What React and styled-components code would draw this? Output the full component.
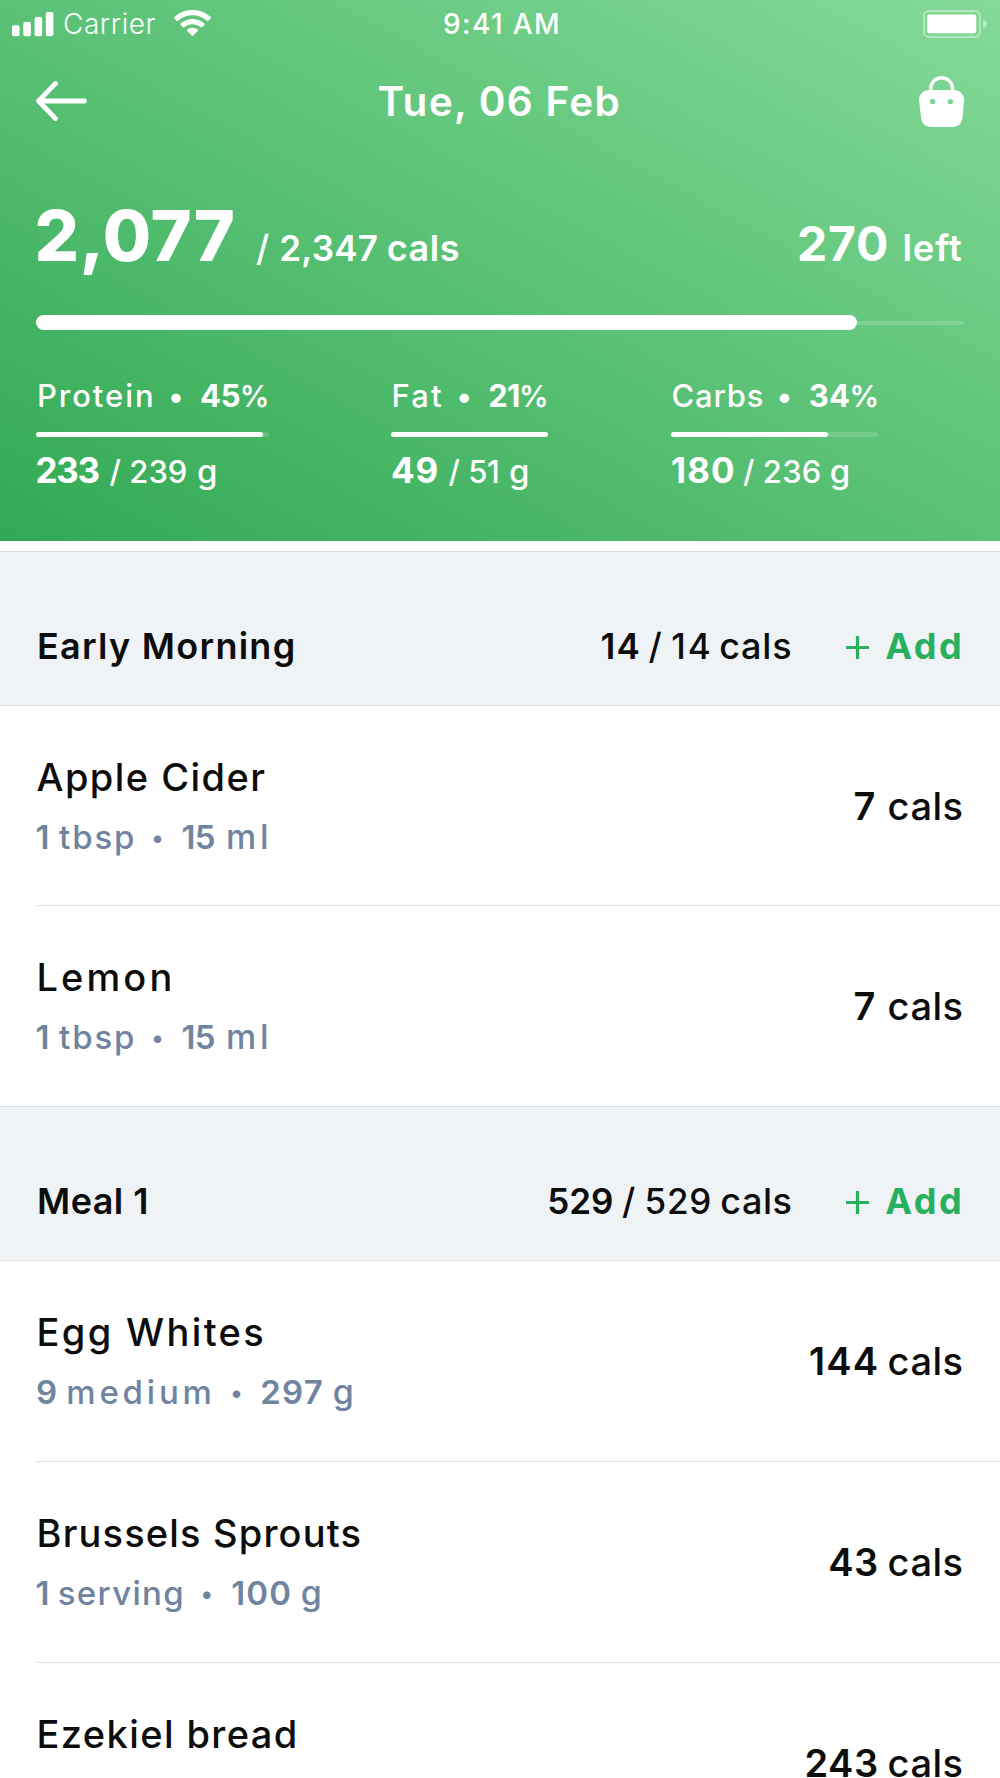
import React from "react";
import styled, { createGlobalStyle } from "styled-components";

const GlobalStyle = createGlobalStyle`
  *, *::before, *::after { box-sizing: border-box; }
  html, body { margin: 0; padding: 0; background: #fff; }
  body { font-family: Inter, "Open Sans", "Liberation Sans", sans-serif; color: #0d0d0d; }
`;

const Screen = styled.div`
  width: 1000px;
  height: 1778px;
  overflow: hidden;
  background: #fff;
`;

/* ---------- text ---------- */

const Word = styled.span`
  display: block;
  flex: none;
  white-space: pre;
  line-height: 1;
  font-size: ${(p) => p.$size}px;
  font-weight: ${(p) => p.$weight || 400};
  letter-spacing: ${(p) => p.$track || 0}px;
  margin-left: ${(p) => p.$before || 0}px;
`;

const Dot = styled.span`
  flex: none;
  width: ${(p) => p.$width}px;
  padding-right: 2px;
  text-align: center;
  line-height: 1;
  font-size: 30px;
`;

const SmallDot = styled(Dot)`
  align-self: flex-end;
  margin-bottom: 4.5px;
  padding-right: 3px;
  font-size: 24px;
`;

const Line = styled.div`
  display: flex;
  align-items: baseline;
`;

/* ---------- header ---------- */

const Header = styled.header`
  display: flex;
  flex-direction: column;
  height: 541px;
  color: #fff;
  background: linear-gradient(to top right, #31a954 0%, #84da98 100%);
`;

const StatusBar = styled.div`
  display: grid;
  grid-template-columns: 431px 1fr auto;
  align-items: center;
  height: 48px;
  padding: 0 13px 0 12px;
`;

const Signal = styled.div`
  display: flex;
  align-items: center;
`;

const WifiSlot = styled.div`
  display: flex;
  margin: 0 0 2px 18px;
`;

const NavBar = styled.nav`
  display: grid;
  grid-template-columns: 341.5px 1fr auto;
  align-items: center;
  height: 107px;
  padding: 0 36px;
`;

const NavTitle = styled(Word)`
  padding-top: 2px;
`;

const IconButton = styled.button`
  display: flex;
  padding: 0 0 ${(p) => p.$lift || 0}px;
  border: 0;
  background: none;
  color: inherit;
`;

const Summary = styled.div`
  display: flex;
  align-items: baseline;
  justify-content: space-between;
  height: 160px;
  padding: 45.5px 37.5px 0 34.5px;
`;

const MainTrack = styled.div`
  display: flex;
  align-items: center;
  height: 15px;
  margin: 0 36px;
  background: linear-gradient(rgba(255, 255, 255, 0.16), rgba(255, 255, 255, 0.16)) center / 100% 4px no-repeat;
  border-radius: 2px;
`;

const MainFill = styled.div`
  width: 821px;
  height: 15px;
  border-radius: 8px;
  background: #fff;
`;

const Macros = styled.div`
  display: grid;
  grid-template-columns: 355px 280px auto;
  justify-content: start;
  padding: 50px 36px 0;
`;

const MacroTrack = styled.div`
  width: ${(p) => p.$width}px;
  height: 5px;
  margin: 20.5px 0 15.5px;
  border-radius: 2.5px;
  background: rgba(255, 255, 255, 0.16);
`;

const MacroFill = styled.div`
  width: ${(p) => p.$width}px;
  height: 5px;
  border-radius: 2.5px;
  background: #fff;
`;

/* ---------- meals ---------- */

const Meals = styled.main`
  padding-top: 10px;
`;

const MealHeader = styled.div`
  display: flex;
  align-items: baseline;
  justify-content: space-between;
  height: 155px;
  padding: 76px 36px 0 37px;
  border-top: 1px solid #d9dbdd;
  border-bottom: 1px solid #dcdfe2;
  background: #eff3f6;
`;

const AddButton = styled.button`
  display: flex;
  align-items: baseline;
  gap: 16px;
  margin-left: 54px;
  padding: 0;
  border: 0;
  background: none;
  font-family: inherit;
  color: #28af60;

  svg { margin-bottom: 2px; }
`;

const FoodRow = styled.div`
  display: flex;
  align-items: center;
  justify-content: space-between;
  height: ${(p) => p.$height}px;
  margin-left: 36px;
  padding-right: 36.5px;

  & + & { box-shadow: 0 -1px 0 #dddfe1; }
`;

const FoodText = styled.div`
  align-self: flex-start;
  padding-top: 52px;
`;

const Portion = styled(Line)`
  margin-top: 24px;
  color: #7084a0;
`;

const Calories = styled(Line)`
  padding-bottom: 1px;
`;

/* ---------- icons ---------- */

const SignalIcon = () => (
  <svg width="42" height="25" viewBox="0 0 42 25" fill="#fff">
    <rect x="0" y="13.2" width="7.6" height="11" rx="1.9" />
    <rect x="11.3" y="10" width="7.6" height="14.2" rx="1.9" />
    <rect x="22.6" y="5" width="7.6" height="19.2" rx="1.9" />
    <rect x="33.8" y="0" width="7.6" height="24.2" rx="1.9" />
  </svg>
);

const WifiIcon = () => (
  <svg width="37" height="27" viewBox="0 0 37 27" fill="#fff">
    <path d="M18.5 0C11.6 0 5.2 2.6.4 7c-.5.5-.5 1 0 1.5l2.2 2.2c.4.4 1 .4 1.4 0C7.9 7.2 12.9 5.2 18.5 5.2s10.6 2 14.500 5.500c.4.4 1 .4 1.400 0l2.200-2.200c.5-.5.5-1 0-1.500C31.800 2.600 25.400 0 18.500 0z" />
    <path d="M18.500 9c-4.500 0-8.600 1.700-11.800 4.500-.5.4-.5 1 0 1.500l2.200 2.200c.4.4.9.4 1.400 0 2.200-1.900 5.100-3 8.200-3s6 1.100 8.200 3c.5.4 1 .4 1.400 0l2.200-2.200c.5-.5.5-1.100 0-1.500C27.100 10.700 23 9 18.500 9z" />
    <path d="M18.500 17.800c-2 0-3.700.7-5.100 1.800-.5.4-.5.9-.1 1.300l4.500 4.700c.4.4 1 .4 1.400 0l4.500-4.700c.4-.4.4-.9-.1-1.300-1.400-1.100-3.100-1.800-5.100-1.800z" />
  </svg>
);

const BatteryIcon = () => (
  <svg width="64" height="28" viewBox="0 0 64 28" fill="none">
    <rect x="1" y="1" width="56" height="26" rx="5" stroke="#fff" strokeOpacity="0.42" strokeWidth="1.8" />
    <rect x="4.2" y="4.5" width="49" height="18.8" rx="2" fill="#fff" />
    <path d="M60 9.200c2.600 1 3.900 2.600 3.900 4.800S62.600 17.800 60 18.800z" fill="#fff" fillOpacity="0.42" />
  </svg>
);

const BackIcon = () => (
  <svg width="51" height="40" viewBox="0 0 51 40" fill="none" stroke="#fff" strokeWidth="4.8" strokeLinecap="round" strokeLinejoin="round">
    <path d="M48.5 20H2.600M19.500 2.400L2.600 20l16.900 17.600" />
  </svg>
);

const BagIcon = () => (
  <svg width="45" height="51" viewBox="0 0 45 51" fill="none">
    <path d="M11.700 16v-3.400a10.900 10.900 0 0 1 21.800 0V16" stroke="#fff" strokeWidth="3.4" />
    <path
      fill="#fff"
      fillRule="evenodd"
      d="M10.500 14h24C41 14 45.400 18.500 45 25l-1.400 15.500C42.900 47.500 39.500 51 33 51H12.500C6 51 2.600 47.500 1.900 40.500L.1 25C-.4 18.500 4 14 10.500 14zM13.600 22.900a2.700 2.700 0 1 0 0 5.400 2.700 2.700 0 0 0 0-5.400zm17.700 0a2.700 2.700 0 1 0 0 5.400 2.700 2.700 0 0 0 0-5.400z"
    />
  </svg>
);

const PlusIcon = () => (
  <svg width="23" height="23" viewBox="0 0 23 23" stroke="currentColor" strokeWidth="3.2">
    <path d="M11.5 0v23M0 11.5h23" />
  </svg>
);

/* ---------- data: [text, letter spacing, space before] ---------- */

const macros = [
  {
    name: ["Protein", 1.95, 1], share: ["45", 0, 1.8], track: 233, fill: 226.5,
    eaten: ["233", -1.32, -0.5], slash: 10.7, goal: ["239", 0, 8.4], unit: 9.6,
  },
  {
    name: ["Fat", 2.2, 0.5], share: ["21", -0.6, 1.8], track: 157, fill: 157,
    eaten: ["49", 0.83, 0], slash: 9.4, goal: ["51", -0.5, 8.4], unit: 9.6,
  },
  {
    name: ["Carbs", 0.8, 0.5], share: ["34", 0.3, 2], track: 207, fill: 157,
    eaten: ["180", 1.1, 0], slash: 7.1, goal: ["236", 0.3, 8.4], unit: 8,
  },
];

const meals = [
  {
    title: ["Early Morning", 1.26], rowHeight: 200,
    eaten: ["14", 1.2], slash: 7.5, goal: ["14", 2.2, 9.4], unit: ["cals", 0.8, 6.1],
    foods: [
      {
        name: ["Apple Cider", 1.45], cals: ["7", 0], calsGap: 12.2,
        count: ["1", 0, -0.5], measure: ["tbsp", 1.9, 9.5], dot: 45.2, amount: ["15", -0.9], unit: ["ml", 3.8, 11.5],
      },
      {
        name: ["Lemon", 3.1], cals: ["7", 0], calsGap: 12.2,
        count: ["1", 0, -0.5], measure: ["tbsp", 1.9, 9.5], dot: 45.2, amount: ["15", -0.9], unit: ["ml", 3.8, 11.5],
      },
    ],
  },
  {
    title: ["Meal 1", 0.45], rowHeight: 201,
    eaten: ["529", 0], slash: 8.5, goal: ["529", 0.7, 9.4], unit: ["cals", 0.5, 8.4],
    foods: [
      {
        name: ["Egg Whites", 2.35], cals: ["144", 1.2], calsGap: 8.2,
        count: ["9", 0, 0], measure: ["medium", 3.8, 9.2], dot: 44.6, amount: ["297", 1.2], unit: ["g", 0, 8.8],
      },
      {
        name: ["Brussels Sprouts", 1.18], cals: ["43", 0.4], calsGap: 9,
        count: ["1", 0, -0.5], measure: ["serving", 1.35, 8.2], dot: 46.2, amount: ["100", 1.1], unit: ["g", 0, 8.6],
      },
      { name: ["Ezekiel bread", 1.4], cals: ["243", 0.5], calsGap: 9 },
    ],
  },
];

const Text = ({ of: [text, track, before], size, weight }) => (
  <Word $size={size} $weight={weight} $track={track} $before={before}>{text}</Word>
);

const Macro = ({ macro }) => (
  <div>
    <Line>
      <Text of={macro.name} size={31} weight={500} />
      <Dot $width={42.5}>•</Dot>
      <Text of={macro.share} size={31} weight={700} />
      <Word $size={29.5} $weight={600} $before={-0.8}>%</Word>
    </Line>
    <MacroTrack $width={macro.track}>
      <MacroFill $width={macro.fill} />
    </MacroTrack>
    <Line>
      <Text of={macro.eaten} size={35} weight={700} />
      <Word $size={31} $weight={500} $before={macro.slash}>/</Word>
      <Text of={macro.goal} size={31} weight={500} />
      <Word $size={33} $weight={500} $before={macro.unit}>g</Word>
    </Line>
  </div>
);

const Food = ({ food, height }) => (
  <FoodRow $height={height}>
    <FoodText>
      <Text of={[food.name[0], food.name[1], 0.5]} size={38} weight={450} />
      {food.count && (
        <Portion>
          <Text of={food.count} size={33} weight={600} />
          <Text of={food.measure} size={33} weight={450} />
          <SmallDot $width={food.dot}>•</SmallDot>
          <Text of={food.amount} size={33} weight={600} />
          <Text of={food.unit} size={34} weight={450} />
        </Portion>
      )}
    </FoodText>
    <Calories>
      <Text of={food.cals} size={38} weight={600} />
      <Text of={["cals", 0.5, food.calsGap]} size={38} weight={450} />
    </Calories>
  </FoodRow>
);

export default function App() {
  return (
    <Screen>
      <GlobalStyle />
      <Header>
        <StatusBar>
          <Signal>
            <SignalIcon />
            <Word $size={28} $weight={300} $track={0.55} $before={9}>Carrier</Word>
            <WifiSlot><WifiIcon /></WifiSlot>
          </Signal>
          <Word $size={28} $weight={500} $track={1.38}>9:41 AM</Word>
          <BatteryIcon />
        </StatusBar>
        <NavBar>
          <IconButton aria-label="Back" $lift={1}><BackIcon /></IconButton>
          <NavTitle $size={40.5} $weight={600} $track={1.3}>Tue, 06 Feb</NavTitle>
          <IconButton aria-label="Shopping bag"><BagIcon /></IconButton>
        </NavBar>
        <Summary>
          <Line>
            <Word $size={70} $weight={800} $track={0.6}>2,077</Word>
            <Word $size={36} $weight={500} $before={20.6}>/</Word>
            <Word $size={35} $weight={600} $track={0.2} $before={10}>2,347</Word>
            <Word $size={36} $weight={600} $track={0.5} $before={8.6}>cals</Word>
          </Line>
          <Line>
            <Word $size={48} $weight={700} $track={0.7}>270</Word>
            <Word $size={36.5} $weight={600} $track={0.8} $before={13.5}>left</Word>
          </Line>
        </Summary>
        <MainTrack><MainFill /></MainTrack>
        <Macros>
          {macros.map((m) => <Macro key={m.name[0]} macro={m} />)}
        </Macros>
      </Header>
      <Meals>
        {meals.map((meal) => (
          <section key={meal.title[0]}>
            <MealHeader>
              <Text of={meal.title} size={36} weight={600} />
              <Line>
                <Text of={meal.eaten} size={35} weight={600} />
                <Word $size={36} $weight={450} $before={meal.slash}>/</Word>
                <Text of={meal.goal} size={35} weight={450} />
                <Text of={meal.unit} size={36} weight={450} />
                <AddButton>
                  <PlusIcon />
                  <Word $size={36} $weight={750} $track={2.4}>Add</Word>
                </AddButton>
              </Line>
            </MealHeader>
            {meal.foods.map((food) => (
              <Food key={food.name[0]} food={food} height={meal.rowHeight} />
            ))}
          </section>
        ))}
      </Meals>
    </Screen>
  );
}
